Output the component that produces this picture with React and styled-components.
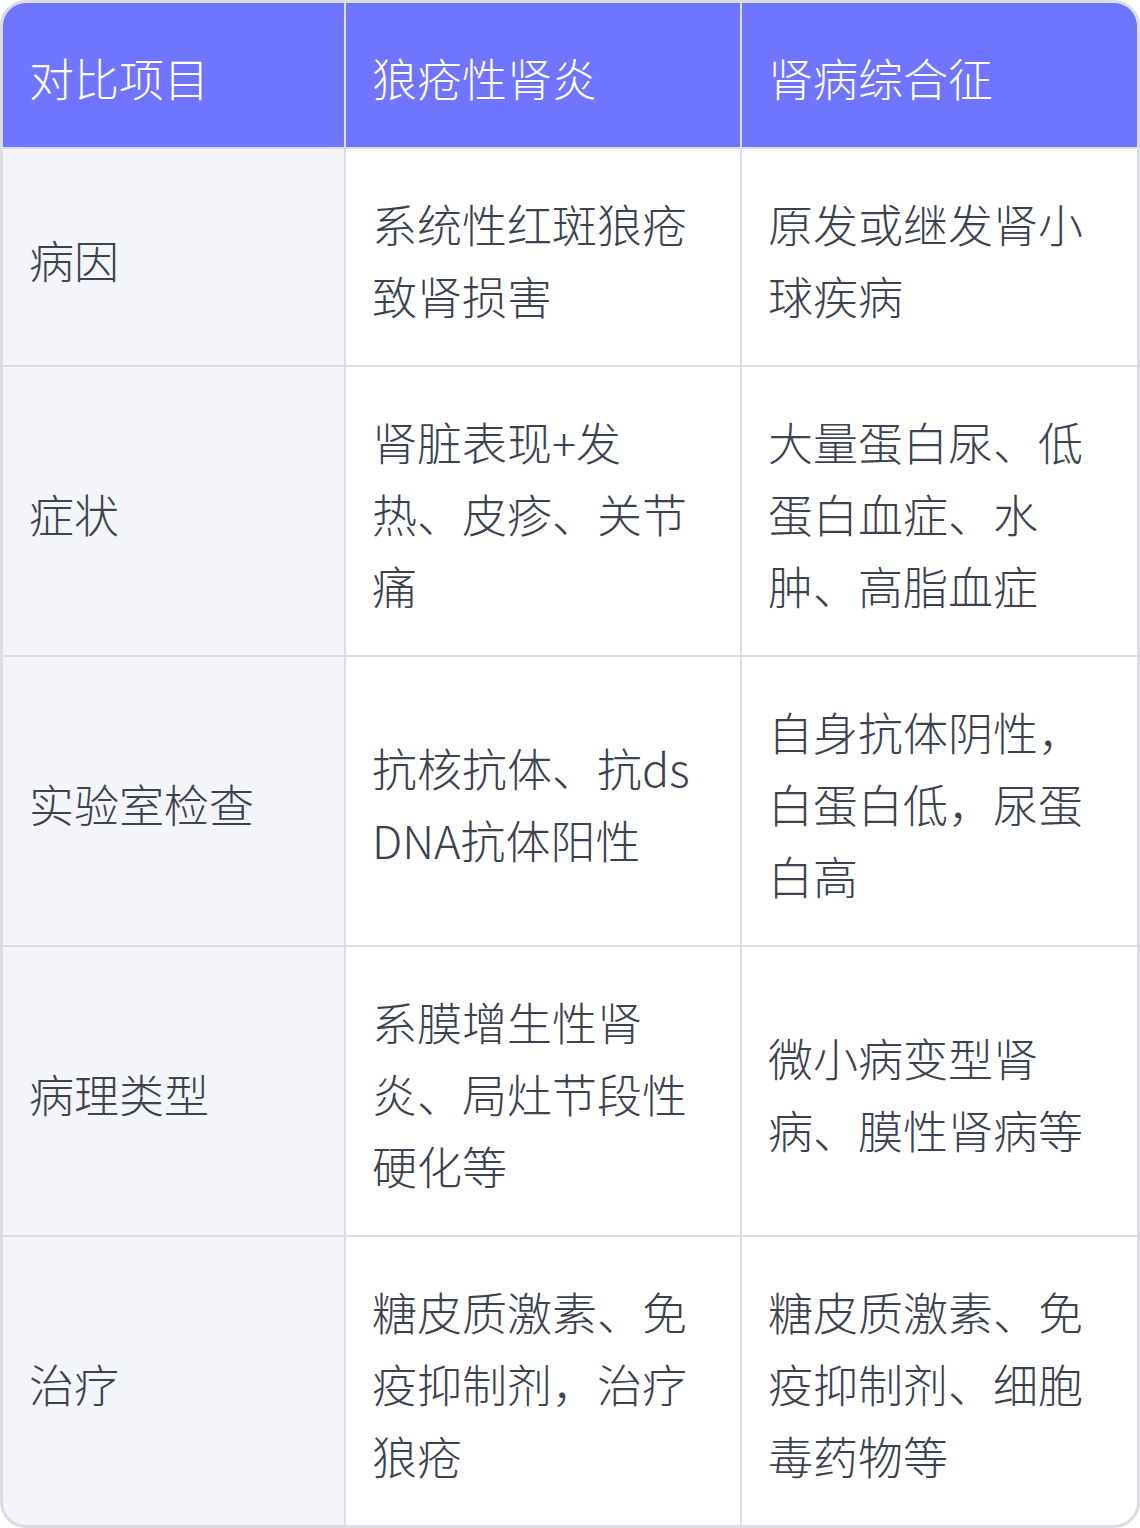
import styled, { createGlobalStyle } from "styled-components";

const GlobalStyle = createGlobalStyle`
  html, body {
    margin: 0;
    padding: 0;
    background: #ffffff;
  }
  body {
    font-family: "Noto Sans CJK SC", "Noto Sans", sans-serif;
  }
`;

const TableCard = styled.div`
  width: 1140px;
  box-sizing: border-box;
  border: 3px solid #dcdde3;
  border-radius: 26px;
  overflow: hidden;
  background: #dcdde3;
`;

const Grid = styled.div`
  display: grid;
  grid-template-columns: 341px 394px 1fr;
  gap: 2px;
`;

const Cell = styled.div`
  display: flex;
  align-items: center;
  padding: 39px 31px 33px 26px;
  font-size: 45px;
  line-height: 72px;
  font-weight: 300;
  word-break: break-all;
  color: ${(p) => (p.$head ? "#ffffff" : "#3d4250")};
  background: ${(p) => (p.$head ? "#7075ff" : p.$first ? "#f4f5f9" : "#ffffff")};
`;

const header = ["对比项目", "狼疮性肾炎", "肾病综合征"];

const rows = [
  ["病因", "系统性红斑狼疮致肾损害", "原发或继发肾小球疾病"],
  ["症状", "肾脏表现+发热、皮疹、关节痛", "大量蛋白尿、低蛋白血症、水肿、高脂血症"],
  ["实验室检查", "抗核抗体、抗dsDNA抗体阳性", "自身抗体阴性，白蛋白低，尿蛋白高"],
  ["病理类型", "系膜增生性肾炎、局灶节段性硬化等", "微小病变型肾病、膜性肾病等"],
  ["治疗", "糖皮质激素、免疫抑制剂，治疗狼疮", "糖皮质激素、免疫抑制剂、细胞毒药物等"],
];

export default function App() {
  return (
    <>
      <GlobalStyle />
      <TableCard>
        <Grid>
          {header.map((h) => (
            <Cell key={h} $head>
              {h}
            </Cell>
          ))}
          {rows.map((r) =>
            r.map((c, i) => (
              <Cell key={r[0] + i} $first={i === 0}>
                {c}
              </Cell>
            ))
          )}
        </Grid>
      </TableCard>
    </>
  );
}
